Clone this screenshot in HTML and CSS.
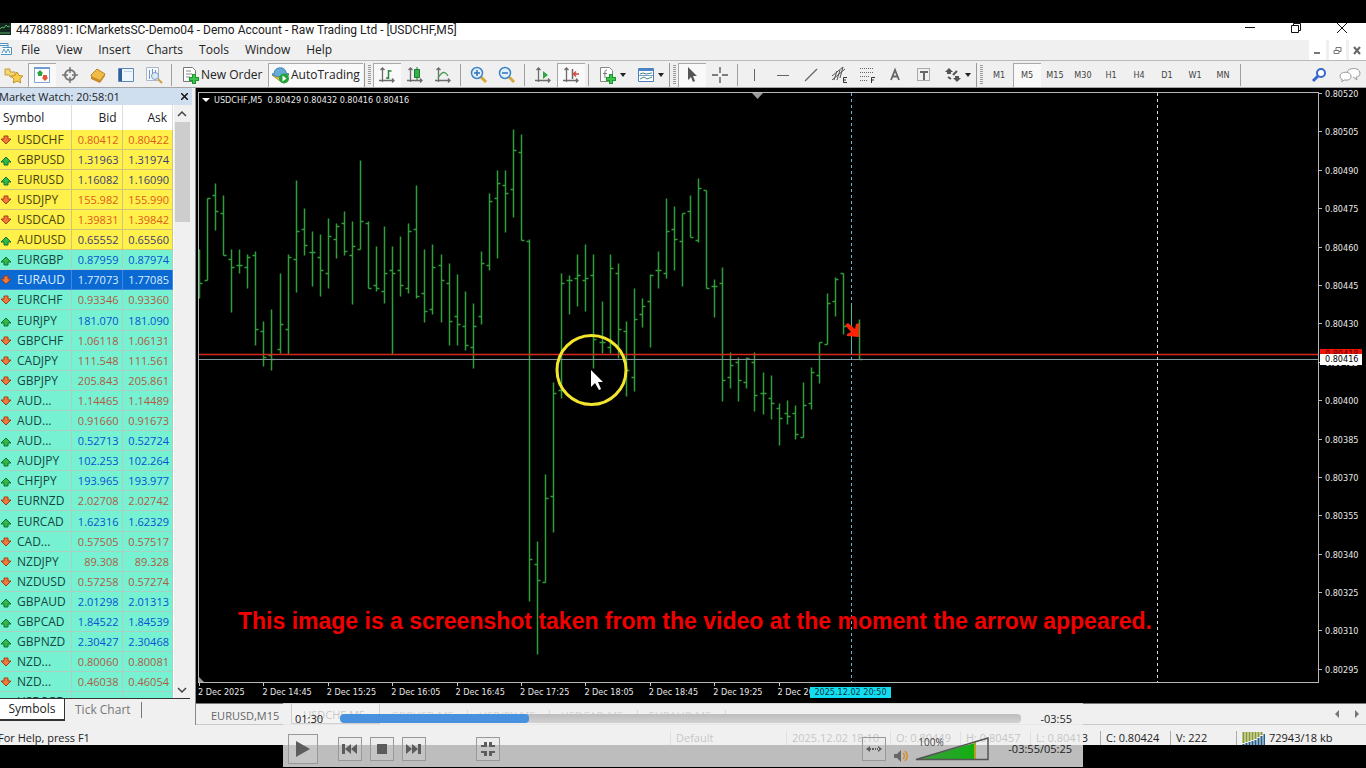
FILE: index.html
```html
<!DOCTYPE html>
<html lang="en">
<head>
<meta charset="utf-8">
<title>44788891: ICMarketsSC-Demo04 - Demo Account</title>
<link rel="stylesheet" href="styles.css">
</head>
<body>
<svg class="defs" aria-hidden="true">
  <symbol id="down" viewBox="0 0 12 12"><path d="M4 2h4v3h3l-5 5-5-5h3z" fill="#f07838" stroke="#a83c18"/></symbol>
  <symbol id="up" viewBox="0 0 12 12"><path d="M4 11h4V8h3L6 3 1 8h3z" fill="#30b848" stroke="#157030"/></symbol>
  <symbol id="axes" viewBox="0 0 18 18"><path d="M4.500 2v14M1 14.500h15M2.500 4l2-2 2 2M14 12.500l2 2-2 2" fill="none" stroke="#6c6c6c" stroke-width="1.300"/></symbol>
</svg>
<div class="letterbox"></div>
<header class="title">
  <svg class="logo" width="12" height="12" viewBox="0 0 12 12"><path d="M0 0h11v12H0z" fill="#12281c"/><path d="M0 6l2-2 2 1 2-3 2 2 2-1M0 10h10" fill="none" stroke="#5fae72"/></svg>
  <h1>44788891: ICMarketsSC-Demo04 - Demo Account - Raw Trading Ltd - [USDCHF,M5]</h1>
  <div class="winbtns">
    <button aria-label="Minimize"><svg width="12" height="12"><path d="M1 5.500h10" stroke="#111"/></svg></button>
    <button aria-label="Restore"><svg width="12" height="12" fill="none" stroke="#111"><path d="M1.500 3.500h7v7h-7zM3.500 3V1.500h7v7H9"/></svg></button>
    <button aria-label="Close"><svg width="12" height="12"><path d="M1 1l10 10M11 1L1 11" stroke="#111"/></svg></button>
  </div>
</header>
<nav class="menu">
  <svg width="14" height="16" viewBox="0 0 14 16"><path d="M0 2.500h8v4M0 4.500h8M2.500 6.500h9v7H1" fill="#fff" stroke="#4d93c4"/><path d="M2 12l2-4 2 4 2-4 2 4" fill="none" stroke="#4d93c4"/></svg>
  <button>File</button><button>View</button><button>Insert</button><button>Charts</button><button>Tools</button><button>Window</button><button>Help</button>
  <div class="mdi">
    <button aria-label="Minimize chart"><svg width="9" height="9"><path d="M1 7h6" stroke="#777" stroke-width="2"/></svg></button>
    <button aria-label="Restore chart"><svg width="9" height="9" fill="none" stroke="#777"><path d="M1 4.500h5v3H1zM3 4V1.500h5v4H6"/></svg></button>
    <button aria-label="Close chart"><svg width="9" height="9"><path d="M1 1l6 7M7 1L1 8" stroke="#666" stroke-width="2"/></svg></button>
  </div>
</nav>
<div class="toolbar" role="toolbar">
  <button class="tb" aria-label="New chart"><svg width="20" height="18"><path d="M1 3h5v3h5v5H6v-2H1z" fill="#f5d774" stroke="#c39b35"/><path d="M13 6l2 3.500 4 .5-3 3 .7 4-3.700-2-3.700 2 .7-4-3-3 4-.5z" fill="#f8cf4a" stroke="#c5922a"/></svg></button>
  <button class="tb on" aria-label="Market watch"><svg width="18" height="18"><path d="M1.500 1.500h15v15h-15z" fill="#fff" stroke="#7ea6d0"/><path d="M1 2h16" stroke="#6f9bd0" stroke-width="2"/><path d="M7 4l3.500 3.500H9V10H5V7.500H3.500z" fill="#2aa43c"/><path d="M12 15l3.500-3.500H14V9h-4v2.500H8.500z" fill="#e2553a"/></svg></button>
  <button class="tb" aria-label="Data window"><svg width="18" height="18"><circle cx="9" cy="9" r="5" fill="none" stroke="#777" stroke-width="2"/><path d="M9 1v6M9 11v6M1 9h6M11 9h6" stroke="#777" stroke-width="1.500"/></svg></button>
  <button class="tb" aria-label="Navigator"><svg width="18" height="18"><path d="M2 9l6-6 8 5-5 7-8-3z" fill="#f0bc45" stroke="#b5822a"/><path d="M2 10l9 4 5-6v2l-5 7-9-4z" fill="#c88928"/></svg></button>
  <button class="tb" aria-label="Terminal"><svg width="18" height="18"><path d="M1.500 2.500h15v13h-15z" fill="#eef5fc" stroke="#5b88b8"/><path d="M2 3h3v12H2z" fill="#2f5f98"/><path d="M7 5.500h8" stroke="#bcd2e8"/></svg></button>
  <button class="tb" aria-label="Strategy tester"><svg width="18" height="18"><path d="M1.500 1.500h12v13h-12z" fill="#f5f9fd" stroke="#a9b9c9"/><path d="M4.500 4v9M7.500 3v8M10.500 4v7" stroke="#7595bd"/><circle cx="10" cy="10" r="3.500" fill="#dcebfa" stroke="#7b9cc0"/><path d="M13 13l4 4" stroke="#d0a040" stroke-width="2"/></svg></button>
  <span class="sep"></span>
  <button class="wide neworder"><svg width="18" height="18"><path d="M1.500 1.500h9l3 3v11h-12z" fill="#fff" stroke="#777"/><path d="M4 5h5M4 8h6M4 11h4" stroke="#888"/><path d="M12 8v10M7 13h10" stroke="#19992b" stroke-width="4"/><path d="M12 9v8M8 13h8" stroke="#3cc44e" stroke-width="2"/></svg>New Order</button>
  <button class="wide auto on"><svg width="19" height="18"><path d="M1 9l8 6 9-6-8-3z" fill="#efc443" stroke="#bb9228"/><path d="M3 8c0-8 12-8 12-1l3 1c-5 4-13 4-17 0z" fill="#67acd8" stroke="#3a81b5"/><circle cx="13" cy="12.500" r="5" fill="#21a338"/><path d="M11.500 9.500l4 3-4 3z" fill="#fff"/></svg>AutoTrading</button>
  <span class="grip"></span>
  <button class="tb on" aria-label="Bar chart"><svg width="18" height="18"><use href="#axes"/><path d="M10.500 4v9M10.500 5h3M8 12h2" stroke="#2b8a3b" stroke-width="1.500"/></svg></button>
  <button class="tb" aria-label="Candlesticks"><svg width="18" height="18"><use href="#axes"/><path d="M11 1v13" stroke="#1f7c2e"/><path d="M8.500 3.500h5v8h-5z" fill="#32b347" stroke="#1f7c2e"/></svg></button>
  <button class="tb" aria-label="Line chart"><svg width="18" height="18"><use href="#axes"/><path d="M4 12c4-7 7-7 10-2" fill="none" stroke="#4d9a59" stroke-width="1.300"/></svg></button>
  <span class="sep"></span>
  <button class="tb" aria-label="Zoom in"><svg width="18" height="18"><path d="M11 11l5 5" stroke="#d8aa35" stroke-width="3"/><circle cx="7" cy="7" r="5.500" fill="#e1f0fc" stroke="#3f83c4" stroke-width="1.500"/><path d="M7 4v6M4 7h6" stroke="#2f73b8" stroke-width="1.500"/></svg></button>
  <button class="tb" aria-label="Zoom out"><svg width="18" height="18"><path d="M11 11l5 5" stroke="#d8aa35" stroke-width="3"/><circle cx="7" cy="7" r="5.500" fill="#e1f0fc" stroke="#3f83c4" stroke-width="1.500"/><path d="M4 7h6" stroke="#2f73b8" stroke-width="1.500"/></svg></button>
  <span class="sep"></span>
  <button class="tb" aria-label="Auto scroll"><svg width="18" height="18"><use href="#axes"/><path d="M9 5l5 4-5 4z" fill="#2fa843"/></svg></button>
  <button class="tb on" aria-label="Chart shift"><svg width="18" height="18"><use href="#axes"/><path d="M10.500 3v10" stroke="#666" stroke-width="1.500"/><path d="M17 8h-5M14 5.500L11.500 8l2.500 2.500" fill="none" stroke="#d0473a" stroke-width="1.500"/></svg></button>
  <span class="sep"></span>
  <button class="tb drop" aria-label="Indicators"><svg width="18" height="18"><path d="M1.500 1.500h9l3 3v11h-12z" fill="#fff" stroke="#888"/><path d="M8 4c-3 0-2 3-2 8M4 7.500h4" fill="none" stroke="#777"/><path d="M12 8v10M7 13h10" stroke="#19992b" stroke-width="4"/><path d="M12 9v8M8 13h8" stroke="#3cc44e" stroke-width="2"/></svg><i></i></button>
  <button class="tb drop" aria-label="Templates"><svg width="18" height="18"><path d="M1.500 2.500h15v13h-15z" fill="#fff" stroke="#4d7fbc"/><path d="M1 3h16v2H1z" fill="#4d83c8"/><path d="M2 9.500h14" stroke="#7da0cc"/><path d="M3 8l3-1 3 1 6-1M3 13l4-2 3 2 5-2" fill="none" stroke="#4c8a84"/></svg><i></i></button>
  <span class="grip"></span>
  <button class="tb on" aria-label="Cursor"><svg width="18" height="18"><path d="M5 1v13l3-3 2 5 2-1-2-5h4z" fill="#555"/></svg></button>
  <button class="tb" aria-label="Crosshair"><svg width="18" height="18"><path d="M9 1v6M9 11v6M1 9h6M11 9h6" stroke="#555" stroke-width="1.300"/></svg></button>
  <span class="sep"></span>
  <button class="tb" aria-label="Vertical line"><svg width="18" height="18"><path d="M7.500 3v12" stroke="#666"/></svg></button>
  <button class="tb" aria-label="Horizontal line"><svg width="18" height="18"><path d="M2 9.500h12" stroke="#666"/></svg></button>
  <button class="tb" aria-label="Trendline"><svg width="18" height="18"><path d="M2 15L14 3" stroke="#666" stroke-width="1.200"/></svg></button>
  <button class="tb" aria-label="Channel"><svg width="18" height="18"><path d="M1 14L14 3M1 10L12 1M3 14l3-9M6 14l3-10M9 12l3-11" fill="none" stroke="#555"/><path d="M16 11.500h-3.500v5H16M12.500 14H15" fill="none" stroke="#333"/></svg></button>
  <button class="tb" aria-label="Fibonacci"><svg width="18" height="18"><path d="M1 2.500h14M1 6.500h14M1 10.500h10M1 14.500h8" stroke="#666" stroke-dasharray="1 1"/><path d="M16 11.500h-3.500V17M12.500 14H15" fill="none" stroke="#333"/></svg></button>
  <button class="tb" aria-label="Text"><svg width="18" height="18"><path d="M4 14l4-10 4 10M5.500 10.500h5" fill="none" stroke="#666" stroke-width="1.800"/></svg></button>
  <button class="tb" aria-label="Text label"><svg width="18" height="18"><path d="M2.500 2.500h12v12h-12z" fill="none" stroke="#666" stroke-dasharray="1 1"/><path d="M5 6h8M9 6v8" stroke="#666" stroke-width="2"/></svg></button>
  <button class="tb drop" aria-label="Arrows"><svg width="18" height="18"><path d="M5 2l4 4H7v2H3V6H1zM13 16l4-4h-2v-2h-4v2H9z" fill="#555"/><path d="M4 11l3 2M9 9l4-4" stroke="#555" stroke-width="2"/></svg><i></i></button>
  <span class="grip"></span>
  <button class="tb">M1</button><button class="tb on">M5</button><button class="tb">M15</button><button class="tb">M30</button><button class="tb">H1</button><button class="tb">H4</button><button class="tb">D1</button><button class="tb">W1</button><button class="tb">MN</button>
  <span class="sep"></span>
  <div class="tbright">
    <button aria-label="Search"><svg width="16" height="16"><circle cx="10" cy="6" r="4" fill="#fff" stroke="#3766cc" stroke-width="2"/><path d="M7 9l-5 5" stroke="#3766cc" stroke-width="3"/></svg></button>
    <button aria-label="Chat"><svg width="22" height="16"><path d="M8 6c0-6 13-6 13 0 0 3-2 4-4 4l1 3-4-3" fill="#fff" stroke="#999"/><path d="M1 9c0-5 11-5 11 0s-5 4-7 4l-2 2v-3c-1 0-2-1-2-3z" fill="#fff" stroke="#999"/></svg></button>
  </div>
</div>

<main class="work">
  <section class="watch">
    <div class="caption"><h2>Market Watch: 20:58:01</h2><button aria-label="Close market watch"><svg width="7" height="7"><path d="M0 0l7 7M7 0L0 7" stroke="#111" stroke-width="1.500"/></svg></button></div>
    <div class="list">
      <div class="clip">
      <table>
        <thead><tr><th>Symbol</th><th>Bid</th><th>Ask</th></tr></thead>
        <tbody id="quotes"></tbody>
      </table>
      </div>
      <div class="scroll"><svg width="10" height="8"><path d="M1 6l4-4 4 4" fill="none" stroke="#444" stroke-width="1.500"/></svg><span></span><svg width="10" height="8"><path d="M1 2l4 4 4-4" fill="none" stroke="#444" stroke-width="1.500"/></svg></div>
    </div>
    <div class="wtabs"><button class="sel">Symbols</button><button>Tick Chart</button></div>
  </section>

  <section class="chartwin">
    <div class="chart">
      <div class="plot">
        <svg id="plot" width="100%" height="100%">
          <path d="M553 0h11l-5.500 6z" fill="#9a9a9a"/>
          <path d="M0 591v-7l7 7z" fill="#9a9a9a"/>
          <path id="bars" fill="none" stroke="#2f9e3a" stroke-width="1.500"/>
          <path d="M0 261.500h1400" stroke="#d8281c" stroke-width="1.500"/>
          <path d="M0 266.500h1400" stroke="#8496a0"/>
          <path d="M652.500 0v600" stroke="#5cc0d0" stroke-dasharray="3 3"/>
          <path d="M652.500 212v46" stroke="#4fb89c"/>
          <path d="M958.500 0v600" stroke="#ddd" stroke-dasharray="3 3"/>
          <path d="M646 232l3-2 7 6 1-5 3-1v14l-12-1v-2l4-2z" fill="#ff2408"/>
          <circle cx="392.500" cy="277" r="34.500" fill="none" stroke="#f2e52c" stroke-width="3"/>
          <path d="M392 277v17l4-4 4 7 2-1-3-7h5z" fill="#fff"/>
        </svg>
        <div class="ohlc"><i></i>USDCHF,M5&nbsp; 0.80429 0.80432 0.80416 0.80416</div>
        <p class="note">This image is a screenshot taken from the video at the moment the arrow appeared.</p>
      </div>
      <div class="prices">
        <span>0.80520</span><span>0.80505</span><span>0.80490</span><span>0.80475</span><span>0.80460</span><span>0.80445</span><span>0.80430</span><span>0.80415</span><span>0.80400</span><span>0.80385</span><span>0.80370</span><span>0.80355</span><span>0.80340</span><span>0.80325</span><span>0.80310</span><span>0.80295</span>
        <b class="ask">0.80418</b><b class="bid">0.80416</b>
      </div>
      <div class="times"><div>
        <span>2 Dec 2025</span><span>2 Dec 14:45</span><span>2 Dec 15:25</span><span>2 Dec 16:05</span><span>2 Dec 16:45</span><span>2 Dec 17:25</span><span>2 Dec 18:05</span><span>2 Dec 18:45</span><span>2 Dec 19:25</span><span>2 Dec 20:05</span></div>
        <b>2025.12.02 20:50</b>
      </div>
    </div>
    <div class="ctabs"><button class="plain">EURUSD,M15</button><button class="sel">USDCHF,M5</button><button>GBPUSD,M5</button><button>USDJPY,M5</button><button>USDCAD,M5</button><button>EURAUD,M5</button>
      <div class="arrows"><svg width="24" height="8"><path d="M4 0v8L0 4zM20 0v8l4-4z" fill="#777"/></svg></div></div>
  </section>
</main>
<footer class="status">
  <span class="help">For Help, press F1</span><span class="s1">Default</span><span class="s2">2025.12.02 18:10</span><span class="s3">O: 0.80449</span><span class="s3">H: 0.80457</span><span class="s3">L: 0.80413</span><span class="s3">C: 0.80424</span><span class="s4">V: 222</span><span class="s5"><svg width="23" height="13"><path d="M1.500 0v11M4.500 0v10M7.500 0v9M10.500 0v8M13.500 0v7M16.500 0v5M19.500 0v3" stroke="#879a2b" stroke-width="2"/><path d="M1.500 12v1M4.500 11v2M7.500 10v3M10.500 9v4M13.500 8v5M16.500 6v7M19.500 4v9M22.500 2v11" stroke="#24608a" stroke-width="2"/></svg>72943/18 kb</span>
</footer>
<div class="letterbox"></div>

<div class="player">
  <div class="seek"><time>01:30</time><progress value="189" max="681" aria-label="Position"></progress><time class="left">-03:55</time></div>
  <div class="controls">
    <button class="play" aria-label="Play"><svg width="14" height="16"><path d="M0 0l14 8-14 8z"/></svg></button>
    <button aria-label="Previous"><svg width="16" height="12"><path d="M0 1h3v10H0zM9 1v10L3 6zM15 1v10L9 6z"/></svg></button>
    <button aria-label="Stop"><svg width="10" height="10"><path d="M0 0h10v10H0z"/></svg></button>
    <button aria-label="Next"><svg width="16" height="12"><path d="M15 1h-3v10h3zM6 1v10l6-5zM0 1v10l6-5z"/></svg></button>
    <button class="full" aria-label="Exit full screen"><svg width="14" height="14"><path d="M3 0h3v5H0V3h3zM8 0h3v3h3v2H8zM0 9h6v5H3v-3H0zM8 9h6v2h-3v3H8z"/></svg></button>
    <button class="fit" aria-label="Fit width"><svg width="16" height="8"><path d="M0 4l4-3v6zM16 4l-4-3v6zM3 3h2v2H3zM6 3h2v2H6zM9 3h1v2H9zM11 3h2v2h-2z"/></svg></button>
    <svg class="speaker" width="15" height="14"><path d="M0 5h3l4-4v12L3 9H0z" fill="#666"/><path d="M9 4c2 2 2 4 0 6M11 2c3 3 3 7 0 10" fill="none" stroke="#d98a2b" stroke-width="1.500"/></svg>
    <div class="volume"><svg width="75" height="24"><defs><linearGradient id="g"><stop offset="0" stop-color="#3f9a3f"/><stop offset="1" stop-color="#10b010"/></linearGradient></defs><path d="M2 22L60 6v16z" fill="url(#g)"/><path d="M60 5v17" stroke="#b8a020" stroke-width="2"/><path d="M1 22.500L73 1v21.500z" fill="none" stroke="#555" stroke-width="1.500"/></svg><span>100%</span></div>
    <time class="left">-03:55/05:25</time>
  </div>
</div>
<script src="chart.js"></script>
</body>
</html>
```

FILE: chart.js
```js
// symbol, bid, ask, direction (u/d)
const quotes = `USDCHF 0.80412 0.80422 d
GBPUSD 1.31963 1.31974 u
EURUSD 1.16082 1.16090 u
USDJPY 155.982 155.990 d
USDCAD 1.39831 1.39842 d
AUDUSD 0.65552 0.65560 u
EURGBP 0.87959 0.87974 u
EURAUD 1.77073 1.77085 d
EURCHF 0.93346 0.93360 d
EURJPY 181.070 181.090 u
GBPCHF 1.06118 1.06131 d
CADJPY 111.548 111.561 d
GBPJPY 205.843 205.861 d
AUD... 1.14465 1.14489 d
AUD... 0.91660 0.91673 d
AUD... 0.52713 0.52724 u
AUDJPY 102.253 102.264 u
CHFJPY 193.965 193.977 u
EURNZD 2.02708 2.02742 d
EURCAD 1.62316 1.62329 u
CAD... 0.57505 0.57517 d
NZDJPY 89.308 89.328 d
NZDUSD 0.57258 0.57274 d
GBPAUD 2.01298 2.01313 u
GBPCAD 1.84522 1.84539 u
GBPNZD 2.30427 2.30468 u
NZD... 0.80060 0.80081 d
NZD... 0.46038 0.46054 d
USDSGD 1.29730 1.29747 u`.split("\n").map(r => r.split(" "));

document.getElementById("quotes").innerHTML = quotes.map(([s, bid, ask, d], i) => {
  const dir = d === "u" ? "up" : "down";
  const cls = [dir, i < 6 ? "major" : "", i === 7 ? "picked" : ""].join(" ");
  return `<tr class="${cls}"><td><svg width="12" height="12"><use href="#${dir}"/></svg>${s}</td><td>${bid}</td><td>${ask}</td></tr>`;
}).join("");

// high, low, open, close of every bar, as window heights
const bars = [
[249,298,283,283],[198,280,280,198],[183,230,195,211],[195,255,213,255],[249,312,259,267],[249,273,265,265],[254,288,267,257],[251,345,255,329],[321,366,331,357],[309,370,355,359],
[273,353,349,324],[254,354,329,257],[180,292,259,231],[208,255,229,245],[231,286,252,252],[234,296,257,270],[218,288,273,236],[223,258,239,226],[211,255,223,251],[221,304,255,246],
[160,249,249,221],[221,288,223,288],[246,291,285,288],[226,303,291,273],[246,354,270,273],[236,296,270,285],[223,293,288,231],[185,298,229,296],[249,322,293,311],[244,314,309,267],
[254,322,265,280],[263,345,283,321],[274,345,316,324],[291,350,326,345],[303,368,347,326],[251,324,316,263],[193,270,265,201],[170,258,198,183],[170,232,185,193],[129,217,189,150],
[134,240,152,240],[239,601,241,559],[541,654,564,580],[474,582,582,498],[382,532,496,393],[273,398,390,283],[275,314,280,280],[254,306,278,275],[244,311,280,278],[254,368,275,339],
[301,353,342,342],[254,353,347,268],[263,358,273,329],[321,396,331,370],[288,391,377,319],[298,327,314,306],[274,347,301,275],[251,288,270,270],[198,278,273,231],[206,270,229,239],
[213,286,241,213],[195,237,211,237],[178,242,240,188],[190,288,190,288],[279,317,286,286],[267,401,283,380],[352,388,377,365],[357,401,362,380],[357,388,382,358],[352,411,362,395],
[372,414,393,393],[375,419,398,403],[403,445,408,418],[400,424,413,416],[405,439,413,434],[382,437,437,405],[367,409,403,372],[342,383,375,342],[293,344,344,303],[277,316,301,279],
[273,334,273,326],null,[319,359,326,359]];
document.getElementById("bars").setAttribute("d", bars.map((b, i) => {
  if (!b) return "";
  const x = Math.round(i * 8.05) + 0.5;
  const [h, l, o, c] = b.map(v => v - 92.5);
  return `M${x} ${h}V${l}M${x - 3} ${o}H${x}M${x} ${c}H${x + 3}`;
}).join(""));
```

FILE: styles.css
```css
* { box-sizing: border-box; }
body { margin: 0; height: 100vh; display: flex; flex-direction: column; overflow: hidden; position: relative; background: #000; color: #222; font: 12px/16px "Open Sans", "Noto Sans", sans-serif; }
button { border: 0; padding: 0; margin: 0; background: none; font: inherit; color: inherit; display: flex; align-items: center; justify-content: center; }
svg { display: block; flex: none; }
h1, h2, p { margin: 0; font-size: inherit; font-weight: normal; white-space: nowrap; }
.defs { width: 0; height: 0; position: absolute; }
.letterbox { flex: 0 0 23px; background: #000; }

.title { flex: 0 0 17px; display: flex; background: #fff; }
.logo { width: 16px; margin-left: -2px; }
.title h1 { font-family: Roboto, "Open Sans", sans-serif; line-height: 14px; margin-left: 2px; }
.winbtns { margin-left: auto; display: flex; padding-right: 1px; height: 10px; }
.winbtns button { width: 46px; }

.menu { flex: 0 0 20px; display: flex; background: #f0f0f1; }
.menu > svg { margin-right: 7px; margin-top: 1px; }
.menu > button { margin-right: 16px; line-height: 18px; }
.mdi { margin-left: auto; display: flex; gap: 3px; }
.mdi button { width: 17px; height: 20px; background: #fff; }

.toolbar { flex: 0 0 28px; display: flex; align-items: center; background: #f0f0f0; border-top: 1px solid #b8b8b8; border-bottom: 1px solid #a5a5a5; padding-top: 2px; }
.tb { width: 28px; height: 24px; font: 9px/12px "DejaVu Sans Condensed", "DejaVu Sans", sans-serif; color: #444; flex: none; }
.on { background: #f9f9f9; box-shadow: inset 1px 1px #a8a8a8; }
.drop { width: 38px; gap: 6px; justify-content: flex-start; padding-left: 6px; }
.drop i { border: 3px solid transparent; border-top: 4px solid #222; border-bottom: 0; margin-left: -3px; }
.sep { flex: 0 0 1px; height: 22px; background: #a0a0a0; margin: 0 4px 0 3px; }
.grip { flex: 0 0 9px; height: 24px; border-left: 1px solid #999; background: repeating-linear-gradient(#999 0 1px, #f0f0f0 1px 2px) 3px 2px / 3px 20px no-repeat; }
.wide { height: 24px; gap: 1px; flex: none; justify-content: flex-start; }
.neworder { width: 90px; padding-left: 6px; }
.auto { width: 95px; padding-left: 3px; margin: 0 1px 0 2px; }
.tbright { margin-left: auto; display: flex; gap: 12px; padding-right: 5px; }

.work { flex: 1; min-height: 0; display: flex; background: #f0f0f0; }
.watch { flex: 0 0 196px; display: flex; flex-direction: column; border-right: 1px solid #8a8a8a; }
.caption { flex: 0 0 17px; margin-right: 3px; background: #cfdff0; display: flex; align-items: center; justify-content: space-between; padding-right: 4px; font-size: 11px; line-height: 15px; }
.caption h2 { margin-left: -1px; }
.list { flex: 1; min-height: 0; display: flex; border-bottom: 1px solid #333; margin-right: 5px; }
.clip { flex: 0 0 174px; overflow: hidden; background: #fff; }
table { width: 173px; border-collapse: separate; border-spacing: 0; table-layout: fixed; font-size: 11px; line-height: 19px; }
th { height: 25px; padding: 0 5px 0 3px; background: #fff; border-right: 1px solid #ddd; text-align: right; font-size: 12px; font-weight: normal; }
th:first-child { width: 72px; text-align: left; }
td { height: 20px; padding: 0 3px 0 0; text-align: right; background: #76f2d3; border-right: 1px solid #a9d0c0; border-bottom: 1px solid #a9d0c0; }
tr:nth-child(10n) td { height: 21px; }
td:first-child { text-align: left; font-size: 12px; padding: 0; overflow: hidden; white-space: nowrap; }
td svg { display: inline-block; vertical-align: -2px; margin-right: 5px; }
.down td { color: #b05a42; }
.up td { color: #0a50d2; }
.major td { background: #fff04a; border-color: #cfc47a; }
.major.down td { color: #dd5a22; }
.major.up td { color: #3c3c78; }
.up td:first-child, .down td:first-child { color: #16453f; }
.major.down td:first-child, .major.up td:first-child { color: #4a4410; }
.picked td, .picked.down td { background: #0b69d3; color: #d8efff; border-color: #3c8ae0; }
.picked.down td:first-child { color: #d8efff; }
.scroll { flex: 0 0 16px; display: flex; flex-direction: column; align-items: center; padding: 5px 0 4px; }
.scroll span { width: 15px; height: 100px; background: #cdcdcd; margin: 4px 0 auto; }
.wtabs { flex: 0 0 24px; display: flex; padding-bottom: 4px; }
.wtabs button { color: #777; padding: 0 10px; }
.wtabs button + button { border-right: 1px solid #777; margin: 3px 0; }
.wtabs .sel { width: 65px; background: #fff; color: #222; border: solid #333; border-width: 0 1px 2px 0; }

.chartwin { flex: 1; min-width: 0; display: flex; flex-direction: column; }
.chart { flex: 1; min-height: 0; display: grid; grid-template: minmax(0, 1fr) 20px / minmax(0, 1fr) 47px; padding: 4px 0 0 2px; background: #000; color: #e8e8e8; font: 9px/12px "DejaVu Sans Condensed", "DejaVu Sans", sans-serif; }
.plot { position: relative; border: 1px solid #b8b8b8; overflow: hidden; }
.ohlc { position: absolute; left: 3px; top: 1px; white-space: nowrap; }
.ohlc i { display: inline-block; border: 4px solid transparent; border-top-color: #fff; border-bottom: 0; margin-right: 4px; vertical-align: 1px; }
.note { position: absolute; left: 39px; top: 515px; font: bold 23px/26px "Liberation Sans", Arial, sans-serif; color: #f00000; }
.prices { position: relative; display: flex; flex-direction: column; justify-content: space-between; margin: -4px 0 7px; }
.prices span::before { content: ""; display: inline-block; width: 3px; height: 1px; background: #bbb; margin-right: 3px; vertical-align: 3px; }
.prices b { position: absolute; left: 1px; width: 42px; height: 11px; line-height: 11px; padding-left: 5px; font-weight: normal; }
.ask { top: 261px; background: #f01408; color: #5a0000; }
.bid { top: 266px; background: #fff; color: #000; }
.times { position: relative; grid-column: 1 / 3; }
.times div { display: grid; grid-template-columns: repeat(10, 1fr); width: 644px; padding-top: 3px; }
.times span { white-space: nowrap; position: relative; }
.times span::before { content: ""; position: absolute; left: 1px; top: -3px; width: 1px; height: 3px; background: #ccc; }
.times b { position: absolute; left: 612px; top: 4px; width: 81px; height: 11px; line-height: 11px; background: #14dcf0; color: #063840; font-weight: normal; text-align: center; white-space: nowrap; }
.ctabs { flex: 0 0 21px; display: flex; border-top: 1px solid #777; border-bottom: 1px solid #c8c8c8; color: #666; font-size: 11px; padding-left: 4px; }
.ctabs button { padding: 3px 14px 0 11px; position: relative; }
.ctabs .plain { padding-right: 12px; }
.ctabs button:not(.sel, .plain)::after { content: ""; position: absolute; right: 0; top: 6px; height: 11px; width: 1px; background: #888; }
.ctabs .sel { background: #fff; border: solid #555; border-width: 0 1px 1px; color: #333; }
.arrows { margin-left: auto; align-self: center; padding-right: 7px; }

.status { flex: 0 0 20px; display: flex; align-items: center; background: #f0f0f0; padding: 6px 0 0; white-space: nowrap; font-size: 11px; line-height: 14px; }
.status span { border-left: 1px solid #aaa; padding-left: 5px; }
.status .help { flex: 1; border: 0; padding: 0; margin-left: -2px; }
.s1 { flex: 0 0 116px; }
.s2 { flex: 0 0 104px; }
.s3 { flex: 0 0 70px; }
.s4 { flex: 0 0 66px; }
.s5 { flex: 0 0 130px; display: flex; gap: 4px; align-items: center; }

.player { position: absolute; left: 50%; bottom: 1px; width: 800px; height: 64px; transform: translateX(-50%); background: rgba(240, 240, 240, .79); color: #222; font-size: 11px; }
.seek { display: flex; align-items: center; height: 30px; padding: 1px 11px 0 12px; gap: 17px; }
progress { flex: 0 0 681px; height: 9px; appearance: none; border: 0; border-radius: 4px; overflow: hidden; background: #c8c8c8; }
progress::-webkit-progress-bar { background: linear-gradient(#bdbdbd, #d2d2d2); border-radius: 4px; }
progress::-webkit-progress-value { background: #4791de; border-radius: 4px; }
.left { margin-left: auto; white-space: nowrap; }
.controls { display: flex; align-items: center; height: 32px; padding: 0 11px 0 5px; }
.controls button { width: 24px; height: 24px; border: 1px solid #999; margin-right: 8px; background: rgba(225, 225, 225, .2); fill: #5c5c5c; flex: none; }
.controls .play { width: 30px; height: 30px; margin-right: 20px; }
.controls .full { margin-left: 42px; }
.controls .fit { margin-left: auto; }
.speaker { margin: 14px 6px 0 0; }
.volume { position: relative; margin-right: 18px; }
.volume span { position: absolute; left: 3px; top: 0; font-size: 10px; line-height: 10px; color: #444; }
.controls .left { margin-left: 0; }
```
